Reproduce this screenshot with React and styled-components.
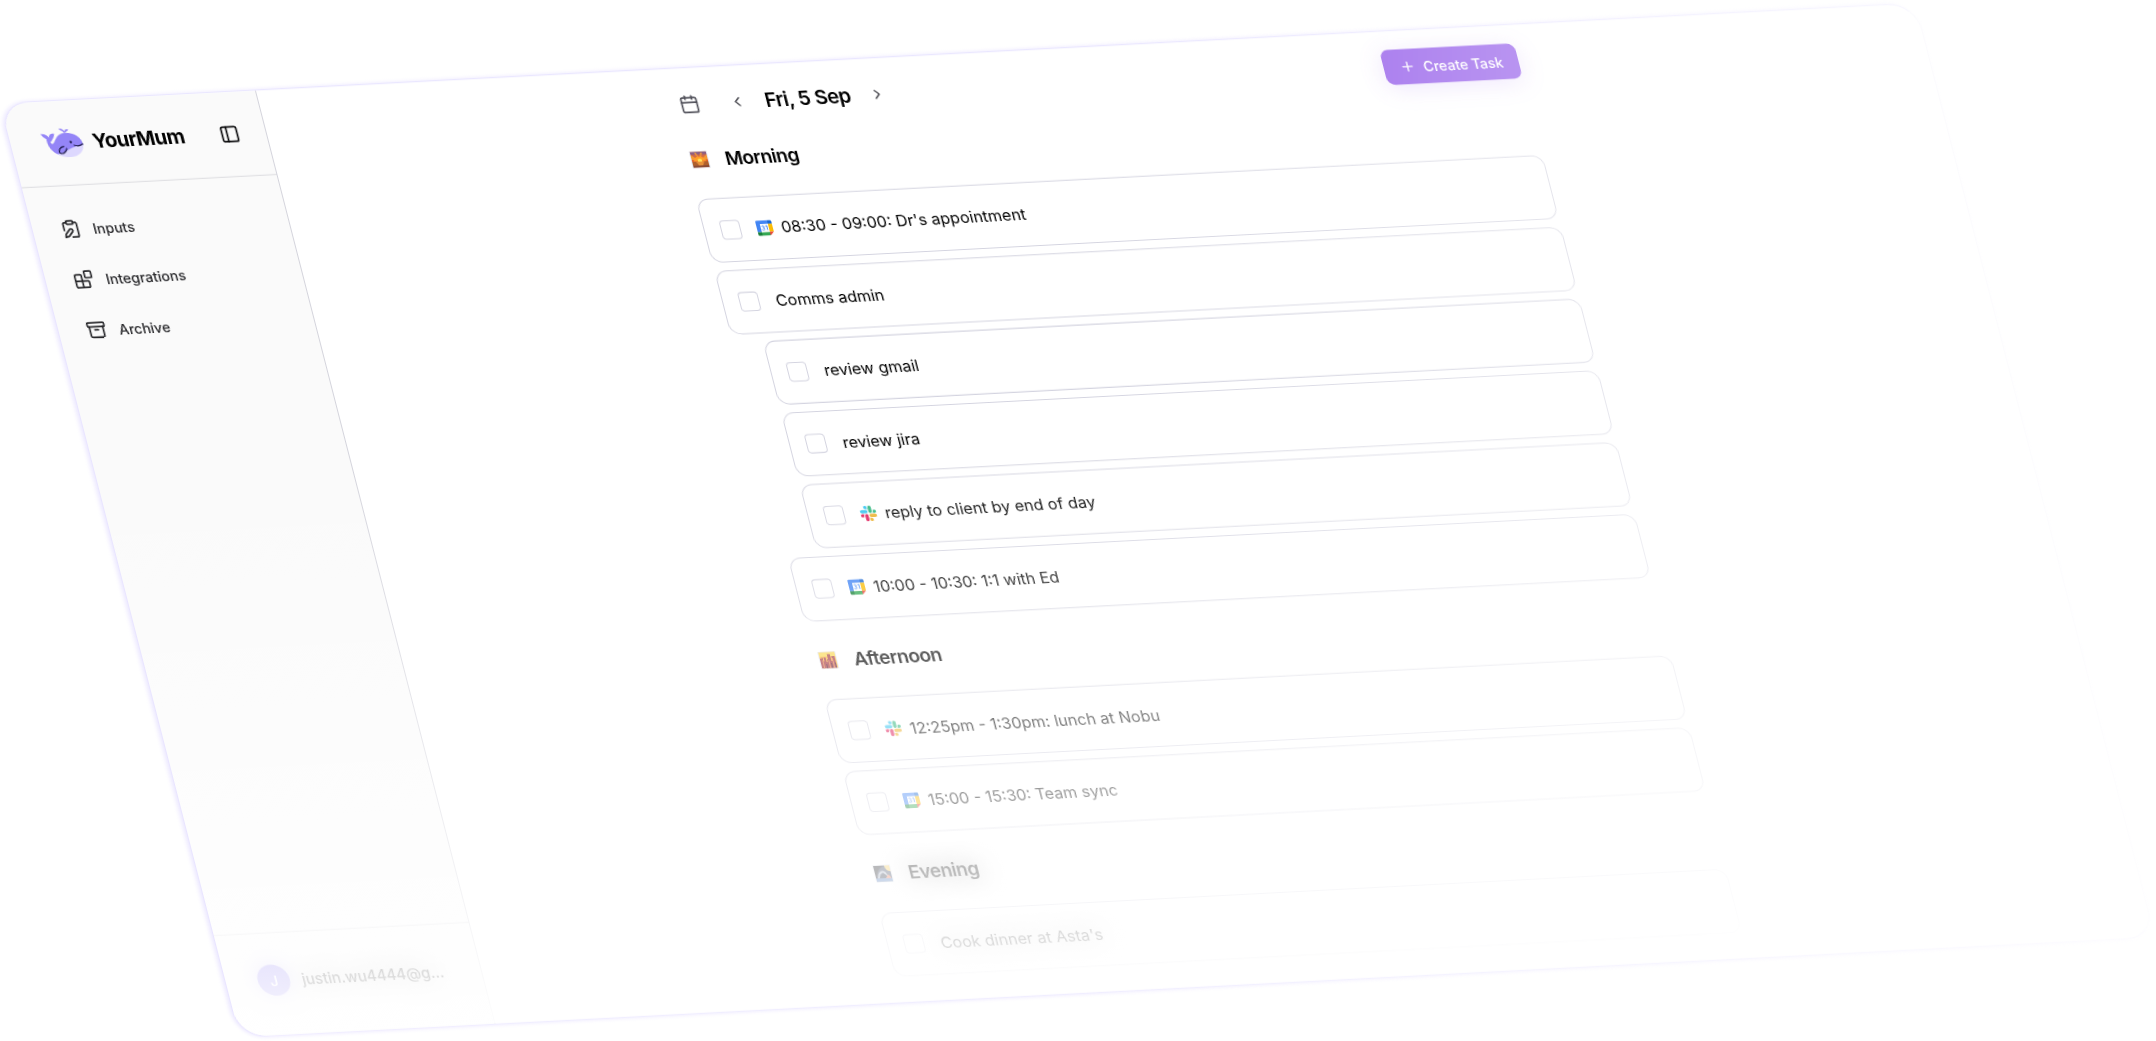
import React from "react"
import styled, { createGlobalStyle, css } from "styled-components"
import {
  Archive,
  Blocks,
  Calendar,
  ChevronLeft,
  ChevronRight,
  PanelLeft,
  Plus,
} from "lucide-react"

const GlobalStyle = createGlobalStyle`
  * {
    box-sizing: border-box;
  }
  body {
    margin: 0;
    background: #ffffff;
    color: #000000;
    font-family: Inter, "Liberation Sans", sans-serif;
    overflow: hidden;
  }
`

const Stage = styled.div`
  min-height: 100vh;
  margin-left: -1px;
  padding-top: 103px;
  mask-image: linear-gradient(to right, black 50%, rgba(0, 0, 0, 0.62) 72%, rgba(0, 0, 0, 0.15) 100%);
`

const Panel = styled.div`
  position: relative;
  display: flex;
  width: 89vw;
  min-height: 964px;
  border: 1px solid #e9e5ff;
  border-right-color: #f4f3fa;
  border-radius: 28px;
  box-shadow: -2px 0 4px 0 #ebe7ff;
  overflow: hidden;
  background: #ffffff;
  transform-origin: 0 0;
  transform: rotate(-3deg) skewX(11.4deg) rotateX(11deg);
`

/* white wash that grows towards the bottom of the panel */
const Fade = styled.div`
  position: absolute;
  inset: 0;
  pointer-events: none;
  background: linear-gradient(to bottom, transparent 40%, rgba(255, 255, 255, 0.95) 100%);
`

const Sidebar = styled.aside`
  display: flex;
  flex-direction: column;
  flex: 0 0 256px;
  min-width: 0;
  background: #fafafa;
  border-right: 1px solid #d4d4dc;
`

const SidebarHeader = styled.div`
  display: flex;
  align-items: center;
  height: 87px;
  padding: 0 26px 0 32px;
  border-bottom: 1px solid #dcdce0;
`

const Brand = styled.h1`
  flex: 1;
  margin: 0 0 0 10px;
  font-size: 20px;
  line-height: 28px;
  font-weight: 700;
  letter-spacing: -0.5px;
`

const IconButton = styled.button`
  display: flex;
  padding: 0;
  border: none;
  background: none;
  cursor: pointer;
  color: ${props => props.$color || "#09090b"};
`

const Nav = styled.nav`
  flex: 1;
  display: flex;
  flex-direction: column;
  gap: 12px;
  padding: 24px 16px;
`

const NavLink = styled.a`
  display: flex;
  align-items: center;
  gap: 12px;
  height: 40px;
  padding: 0 12px;
  color: #27272a;
  font-size: 14px;
  font-weight: 500;
  text-decoration: none;
`

const Account = styled.div`
  display: flex;
  align-items: center;
  gap: 12px;
  padding: 32px 24px 40px 32px;
  border-top: 1px solid #dcdce0;
`

const Avatar = styled.span`
  display: flex;
  flex: 0 0 32px;
  height: 32px;
  align-items: center;
  justify-content: center;
  border-radius: 50%;
  background: #7c6af0;
  color: #ffffff;
  font-size: 14px;
  font-weight: 500;
  box-shadow: 0 0 20px rgba(124, 106, 240, 0.5);
`

const haze = css`
  text-shadow: 0 0 24px rgba(0, 0, 0, 0.8);
`

const Email = styled.span`
  white-space: nowrap;
  font-size: 15px;
  font-weight: 500;
  ${haze}
`

const Main = styled.main`
  flex: 1;
  padding: 19px 24px 24px 26px;
`

const Content = styled.div`
  max-width: 848px;
  margin: 0 auto;
`

const TopBar = styled.header`
  display: flex;
  align-items: center;
  height: 36px;
  margin-bottom: 24px;
  padding-left: 8px;
`

const DateNav = styled.div`
  display: flex;
  align-items: center;
  gap: 19px;
  margin-left: 30px;
`

const DateTitle = styled.h2`
  margin: 0;
  font-size: 20px;
  line-height: 28px;
  font-weight: 600;
  letter-spacing: -0.5px;
`

const CreateButton = styled.button`
  display: flex;
  align-items: center;
  gap: 8px;
  height: 36px;
  margin-left: auto;
  padding: 0 16px;
  border: none;
  border-radius: 8px;
  background: #9259e9;
  box-shadow: 0 4px 24px rgba(146, 89, 233, 0.2);
  color: #ffffff;
  font-family: inherit;
  font-size: 14px;
  font-weight: 500;
  cursor: pointer;
`

const Section = styled.section`
  & + & {
    margin-top: 25px;
  }
`

const SectionTitle = styled.h3`
  display: flex;
  align-items: center;
  gap: 16px;
  height: 30px;
  margin: 0 0 25px;
  padding-left: 5px;
  font-size: 19px;
  font-weight: 600;
  letter-spacing: -0.5px;
  ${props => props.$hazy && haze}
`

const TaskList = styled.ul`
  display: flex;
  flex-direction: column;
  gap: 8px;
  margin: 0;
  padding: 0;
  list-style: none;
`

const TaskRow = styled.li`
  display: flex;
  align-items: center;
  height: 66px;
  padding: 0 16px;
  border: 1px solid #d4d4e0;
  border-radius: 12px;
  ${props =>
    props.$nested &&
    css`
      margin-left: 30px;
    `}
`

const Checkbox = styled.input`
  appearance: none;
  width: 20px;
  height: 20px;
  margin: 0 16px 0 0;
  border: 1px solid #d4d4e0;
  border-radius: 4px;
  background: #ffffff;
`

const TaskLabel = styled.label`
  display: flex;
  align-items: center;
  gap: 8px;
  font-size: 16px;
  line-height: 24px;
  ${props => props.$hazy && haze}
`

const Whale = () => (
  <svg width="40" height="30" viewBox="0 0 40 30" fill="none">
    <path d="M4.500 11C4 20 9 27 19 28.500C29 30 38 25 39.500 18C40 10 33 5 25 5C15 5 14 12 10.500 15C8.500 16.500 7.500 14 8 10.500Z" fill="#9485f7" />
    <path d="M12 26C20 26.500 24 19.500 39.500 18C39 25 32 29.800 25 29.800C19 29.800 15 28.500 12 26Z" fill="#ddd8fe" />
    <path d="M5.500 12.500C5 9.500 1.500 9 0 5C4 4.500 6.500 6.500 7.500 9C8 6 10 4.500 13.500 5C13 9 10.500 10.500 9 13Z" fill="#9485f7" />
    <path d="M23.500 5C23.500 2.500 20.500 3 19 0C22 0 24 1.500 24.200 3.500C24.800 1.500 26.500 1 28.500 1.500C28 3.500 25 3.500 24.500 5Z" fill="#9485f7" />
    <circle cx="28" cy="14.500" r="1.200" fill="#1e1b4b" />
    <path d="M30.500 18C34 19.500 37 18.500 39.300 17" stroke="#1e1b4b" strokeWidth="1.200" strokeLinecap="round" />
    <path d="M20 18.500C16 19 14 22 14.500 25C17 27 21 25 22.500 21" stroke="#1e1b4b" strokeWidth="1.200" strokeLinecap="round" />
  </svg>
)

const ClipboardPen = ({ size }) => (
  <svg
    width={size}
    height={size}
    viewBox="0 0 24 24"
    fill="none"
    stroke="currentColor"
    strokeWidth="2"
    strokeLinecap="round"
    strokeLinejoin="round"
  >
    <rect width="8" height="4" x="8" y="2" rx="1" />
    <path d="M10.420 12.610a2.100 2.100 0 1 1 2.970 2.970L7.950 21 4 22l.990-3.950z" />
    <path d="M16 4h2a2 2 0 0 1 2 2v14a2 2 0 0 1-2 2h-5.500" />
    <path d="M4 13.500V6a2 2 0 0 1 2-2h2" />
  </svg>
)

const CalendarLogo = () => (
  <svg width="16" height="16" viewBox="0 0 16 16">
    <path d="M1.500 0H12v4H4v8H0V1.500A1.500 1.500 0 0 1 1.500 0Z" fill="#4285f4" />
    <path d="M12 0h2.500A1.500 1.500 0 0 1 16 1.500V4h-4Z" fill="#1967d2" />
    <path d="M12 4h4v8h-4Z" fill="#fbbc04" />
    <path d="M4 12h8v4H4Z" fill="#34a853" />
    <path d="M0 12h4v4H1.500A1.500 1.500 0 0 1 0 14.500Z" fill="#188038" />
    <path d="M12 12h4l-4 4Z" fill="#ea4335" />
    <path d="M4 4h8v8H4Z" fill="#ffffff" />
    <path d="M5.200 6.300C5.600 5.300 7.600 5.400 7.500 6.700C7.400 7.500 6.800 7.700 6.300 7.700C7 7.700 7.800 8.100 7.700 9C7.500 10.400 5.400 10.300 5 9.200M9 6.300L10.400 5.600V10.200" fill="none" stroke="#4285f4" strokeWidth="0.900" />
  </svg>
)

const SlackLogo = () => (
  <svg width="16" height="16" viewBox="0 0 24 24">
    <path fill="#e01e5a" d="M5.042 15.165a2.528 2.528 0 0 1-2.520 2.523A2.528 2.528 0 0 1 0 15.165a2.527 2.527 0 0 1 2.522-2.520h2.520zm1.271 0a2.527 2.527 0 0 1 2.521-2.520 2.527 2.527 0 0 1 2.521 2.520v6.313A2.528 2.528 0 0 1 8.834 24a2.528 2.528 0 0 1-2.521-2.522z" />
    <path fill="#36c5f0" d="M8.834 5.042a2.528 2.528 0 0 1-2.521-2.520A2.528 2.528 0 0 1 8.834 0a2.528 2.528 0 0 1 2.521 2.522v2.520zm0 1.271a2.528 2.528 0 0 1 2.521 2.521 2.528 2.528 0 0 1-2.521 2.521H2.522A2.528 2.528 0 0 1 0 8.834a2.528 2.528 0 0 1 2.522-2.521z" />
    <path fill="#2eb67d" d="M18.956 8.834a2.528 2.528 0 0 1 2.522-2.521A2.528 2.528 0 0 1 24 8.834a2.528 2.528 0 0 1-2.522 2.521h-2.522zm-1.268 0a2.528 2.528 0 0 1-2.523 2.521 2.527 2.527 0 0 1-2.520-2.521V2.522A2.527 2.527 0 0 1 15.165 0a2.528 2.528 0 0 1 2.523 2.522z" />
    <path fill="#ecb22e" d="M15.165 18.956a2.528 2.528 0 0 1 2.523 2.522A2.528 2.528 0 0 1 15.165 24a2.527 2.527 0 0 1-2.520-2.522v-2.522zm0-1.268a2.527 2.527 0 0 1-2.520-2.523 2.526 2.526 0 0 1 2.520-2.520h6.313A2.527 2.527 0 0 1 24 15.165a2.528 2.528 0 0 1-2.522 2.523z" />
  </svg>
)

const Sunrise = () => (
  <svg width="18" height="18" viewBox="0 0 18 18">
    <rect width="18" height="18" rx="1" fill="#e4e6ec" />
    <rect x="1" y="1" width="16" height="16" fill="#e0622c" />
    <path d="M1 1h16v3H1Z" fill="#8c6084" />
    <path d="M1 4h16v2H1Z" fill="#cf6a4c" />
    <path d="M9 10L1 4v5ZM9 10L5 2h2ZM9 10l2-8h2ZM9 10l8-6v5Z" fill="#f59a34" />
    <path d="M3 10.500a6 5 0 0 1 12 0Z" fill="#ff9f2a" />
    <circle cx="9" cy="10" r="2.200" fill="#ffe45c" />
    <path d="M1 11h16v6H1Z" fill="#b0602c" />
    <path d="M5 11h8l-2 4H7Z" fill="#e8923a" />
    <path d="M1 15h16v2H1Z" fill="#8c4c34" />
  </svg>
)

const CitySunset = () => (
  <svg width="18" height="18" viewBox="0 0 18 18">
    <rect width="18" height="18" rx="1" fill="#e4e6ec" />
    <rect x="1" y="1" width="16" height="16" fill="#f7b23b" />
    <path d="M1 1h16v4H1Z" fill="#fbd84f" />
    <path d="M1 17V7h2v-1h1v4h1V6h2v5h1V8h1V3h3v7h1V5h3v12Z" fill="#a63a3f" />
    <path d="M3 17V9h1v8ZM9 17V9h1v8ZM13 17V7h1v10Z" fill="#e07a4a" />
    <path d="M6 17v-4h1v4ZM11 17v-5h1v5ZM15 17v-5h1v5Z" fill="#5a2033" />
  </svg>
)

const NightPark = () => (
  <svg width="18" height="18" viewBox="0 0 18 18">
    <rect width="18" height="18" rx="1" fill="#e4e6ec" />
    <rect x="1" y="1" width="16" height="16" fill="#2a3550" />
    <path d="M1 1h11C6 3 3 8 2 14H1Z" fill="#05060c" />
    <path d="M3 14C4 7 9 4 12 8l2 5-3-3-2-2-3 2-2 5Z" fill="#a8b2c4" />
    <path d="M5 14c1-4 4-6 6-4l2 4Z" fill="#10182c" />
    <path d="M17 1v6c-3 0-5-2-5-6Z" fill="#f5c74c" />
    <path d="M10 15l4-5 3 5Z" fill="#f0683c" />
    <path d="M1 14h16v3H1Z" fill="#3c6cb4" />
  </svg>
)

const navItems = [
  { label: "Inputs", Icon: ClipboardPen },
  { label: "Integrations", Icon: Blocks },
  { label: "Archive", Icon: Archive },
]

const logos = { calendar: CalendarLogo, slack: SlackLogo }

const sections = [
  {
    title: "Morning",
    Picture: Sunrise,
    tasks: [
      { text: "08:30 - 09:00: Dr's appointment", source: "calendar" },
      { text: "Comms admin" },
      { text: "review gmail", nested: true },
      { text: "review jira", nested: true },
      { text: "reply to client by end of day", source: "slack", nested: true },
      { text: "10:00 - 10:30: 1:1 with Ed", source: "calendar" },
    ],
  },
  {
    title: "Afternoon",
    Picture: CitySunset,
    tasks: [
      { text: "12:25pm - 1:30pm: lunch at Nobu", source: "slack" },
      { text: "15:00 - 15:30: Team sync", source: "calendar" },
    ],
  },
  {
    title: "Evening",
    Picture: NightPark,
    hazy: true,
    tasks: [{ text: "Cook dinner at Asta's" }],
  },
]

const Task = ({ id, text, source, nested, hazy }) => {
  const Logo = logos[source]
  return (
    <TaskRow $nested={nested}>
      <Checkbox type="checkbox" id={id} />
      <TaskLabel htmlFor={id} $hazy={hazy}>
        {Logo && <Logo />}
        {text}
      </TaskLabel>
    </TaskRow>
  )
}

export default () => (
  <Stage>
    <GlobalStyle />
    <Panel>
      <Sidebar>
        <SidebarHeader>
          <Whale />
          <Brand>YourMum</Brand>
          <IconButton aria-label="Toggle sidebar">
            <PanelLeft size={20} />
          </IconButton>
        </SidebarHeader>
        <Nav>
          {navItems.map(({ label, Icon }) => (
            <NavLink href="#" key={label}>
              <Icon size={20} />
              {label}
            </NavLink>
          ))}
        </Nav>
        <Account>
          <Avatar>J</Avatar>
          <Email>justin.wu4444@g...</Email>
        </Account>
      </Sidebar>
      <Main>
        <Content>
          <TopBar>
            <IconButton $color="#52525b" aria-label="Open calendar">
              <Calendar size={20} />
            </IconButton>
            <DateNav>
              <IconButton $color="#3f3f46" aria-label="Previous day">
                <ChevronLeft size={16} />
              </IconButton>
              <DateTitle>Fri, 5 Sep</DateTitle>
              <IconButton $color="#3f3f46" aria-label="Next day">
                <ChevronRight size={16} />
              </IconButton>
            </DateNav>
            <CreateButton>
              <Plus size={16} />
              Create Task
            </CreateButton>
          </TopBar>
          {sections.map(({ title, Picture, tasks, hazy }) => (
            <Section key={title}>
              <SectionTitle $hazy={hazy}>
                <Picture />
                {title}
              </SectionTitle>
              <TaskList>
                {tasks.map((task, i) => (
                  <Task key={task.text} id={`${title}-${i}`} hazy={hazy} {...task} />
                ))}
              </TaskList>
            </Section>
          ))}
        </Content>
      </Main>
      <Fade />
    </Panel>
  </Stage>
)
